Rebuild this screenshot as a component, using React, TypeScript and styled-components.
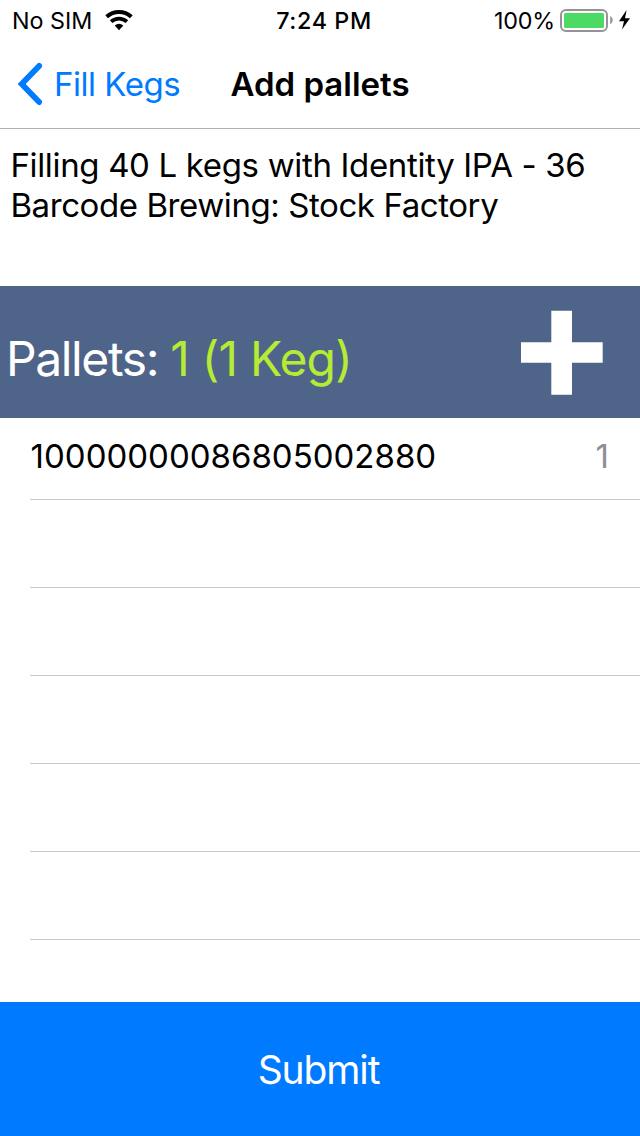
import React from "react";
import styled, { createGlobalStyle } from "styled-components";

const GlobalStyle = createGlobalStyle`
  * { box-sizing: border-box; }
  body {
    margin: 0;
    background: #fff;
    font-family: Inter, "Liberation Sans", sans-serif;
    font-feature-settings: "calt" 0;
    color: #000;
  }
`;

const Screen = styled.div`
  width: 640px;
  height: 1136px;
  display: flex;
  flex-direction: column;
  background: #fff;
  overflow: hidden;
`;

const Label = styled.span<{ $size: number; $track?: number; $weight?: number; $color?: string }>`
  font-size: ${(p) => p.$size}px;
  letter-spacing: ${(p) => p.$track ?? 0}px;
  font-weight: ${(p) => p.$weight ?? 400};
  color: ${(p) => p.$color ?? "inherit"};
  white-space: pre;
`;

const StatusBar = styled.div`
  height: 40px;
  padding: 1px 10px 0 12px;
  display: grid;
  grid-template-columns: 1fr auto 1fr;
  align-items: center;
  line-height: 39px;
`;

const StatusGroup = styled.div<{ $end?: boolean }>`
  display: flex;
  align-items: center;
  justify-content: ${(p) => (p.$end ? "flex-end" : "flex-start")};
  svg { display: block; flex: none; }
`;

const Clock = styled(Label)`
  padding-left: 6px;
`;

const WifiIcon = styled.svg`
  margin-left: 12.5px;
`;

const BatteryIcon = styled.svg`
  margin-left: 5px;
`;

const NavBar = styled.header`
  height: 89px;
  display: grid;
  grid-template-columns: 1fr auto 1fr;
  align-items: center;
  line-height: 88px;
  border-bottom: 1px solid #b2b2b2;
`;

const BackButton = styled.button`
  display: flex;
  align-items: center;
  gap: 10px;
  padding: 0 0 0 16px;
  border: 0;
  background: none;
  font-family: inherit;
  line-height: inherit;
  color: #007aff;
`;

const Description = styled.p`
  height: 157px;
  margin: 0;
  padding: 16px 10px 0 10.4px;
  display: flex;
  flex-direction: column;
  line-height: 40px;
`;

const PalletsBar = styled.section`
  height: 132px;
  padding: 0 37px 0 6px;
  display: flex;
  justify-content: space-between;
  background: #4f6489;
  color: #fff;
  line-height: 146px;
`;

const PalletsTitle = styled.div`
  display: flex;
`;

const AddButton = styled.button`
  padding: 24px 0 0;
  border: 0;
  background: none;
  display: flex;
  align-items: flex-start;
`;

const List = styled.ul`
  flex: 1;
  margin: 0;
  padding: 0 0 0 30px;
  list-style: none;
`;

const Row = styled.li<{ $height?: number }>`
  height: ${(p) => p.$height ?? 88}px;
  padding: 0 31px 0 0.6px;
  display: flex;
  justify-content: space-between;
  line-height: 76px;
  border-bottom: 1px solid #c8c7cc;
`;

const SubmitButton = styled.button`
  height: 134px;
  border: 0;
  padding: 1px 3px 0 0;
  display: flex;
  align-items: center;
  justify-content: center;
  background: #007aff;
  color: #fff;
  font-family: inherit;
  line-height: 48px;
`;

const pallets = [{ code: "10000000086805002880", kegs: 1 }];

export default function App() {
  return (
    <Screen>
      <GlobalStyle />
      <StatusBar>
        <StatusGroup>
          <Label $size={23.3} $track={0}>No SIM</Label>
          <WifiIcon width="28" height="21" viewBox="0 0 28 21">
            <path d="M.3 5.250A20.500 20.500 0 0 1 27.700 5.250L25 8.300A16.400 16.400 0 0 0 3 8.300Z" />
            <path d="M4.800 10.200A13.800 13.800 0 0 1 23.200 10.200L20.600 13.100A9.900 9.900 0 0 0 7.400 13.100Z" />
            <path d="M9.700 15.400A6.800 6.800 0 0 1 18.300 15.400L14 20.200Z" />
          </WifiIcon>
        </StatusGroup>
        <Clock $size={23.3} $weight={550} $track={0.6}>7:24 PM</Clock>
        <StatusGroup $end>
          <Label $size={23.3} $track={-0.2}>100%</Label>
          <BatteryIcon width="70" height="23" viewBox="0 0 70 23">
            <rect x="1" y="1" width="46" height="21" rx="5" fill="none" stroke="#949497" strokeWidth="2" />
            <rect x="4" y="4" width="40" height="15" rx="1.5" fill="#4cd964" />
            <path d="M50.200 7.300c3.300 1 3.300 6.700 0 7.700z" fill="#949497" />
            <path d="M66.600 1 59 12.300H64L62 20.500 70 9.200H65Z" />
          </BatteryIcon>
        </StatusGroup>
      </StatusBar>
      <NavBar>
        <BackButton>
          <svg width="28" height="44" viewBox="0 0 28 44" fill="none" stroke="#007aff" strokeWidth="5.800" strokeLinecap="round" strokeLinejoin="miter">
            <path d="M23.100 3.900 5.700 22 23.100 40.100" />
          </svg>
          <Label $size={33} $track={-0.48}>Fill Kegs</Label>
        </BackButton>
        <Label $size={33} $weight={600}>Add pallets</Label>
      </NavBar>
      <Description>
        <Label $size={33} $track={-0.34}>Filling 40 L kegs with Identity IPA - 36</Label>
        <Label $size={33} $track={-0.42}>Barcode Brewing: Stock Factory</Label>
      </Description>
      <PalletsBar>
        <PalletsTitle>
          <Label $size={48} $track={-1.38}>Pallets: </Label>
          <Label $size={48} $track={-0.8} $color="#b5eb35">1 (1 Keg)</Label>
        </PalletsTitle>
        <AddButton aria-label="Add pallet">
          <svg width="82" height="85" viewBox="0 0 82 85" fill="#fff">
            <path d="M30.300 .7H51V32.300H81.700V52.700H51V84.700H30.300V52.700H0V32.300H30.300Z" />
          </svg>
        </AddButton>
      </PalletsBar>
      <List>
        {pallets.map((p) => (
          <Row key={p.code} $height={82}>
            <Label $size={33}>{p.code}</Label>
            <Label $size={33} $color="#8e8e93">{p.kegs}</Label>
          </Row>
        ))}
        {[0, 1, 2, 3, 4].map((i) => (
          <Row key={i} />
        ))}
      </List>
      <SubmitButton>
        <Label $size={39} $track={-1.1}>Submit</Label>
      </SubmitButton>
    </Screen>
  );
}
